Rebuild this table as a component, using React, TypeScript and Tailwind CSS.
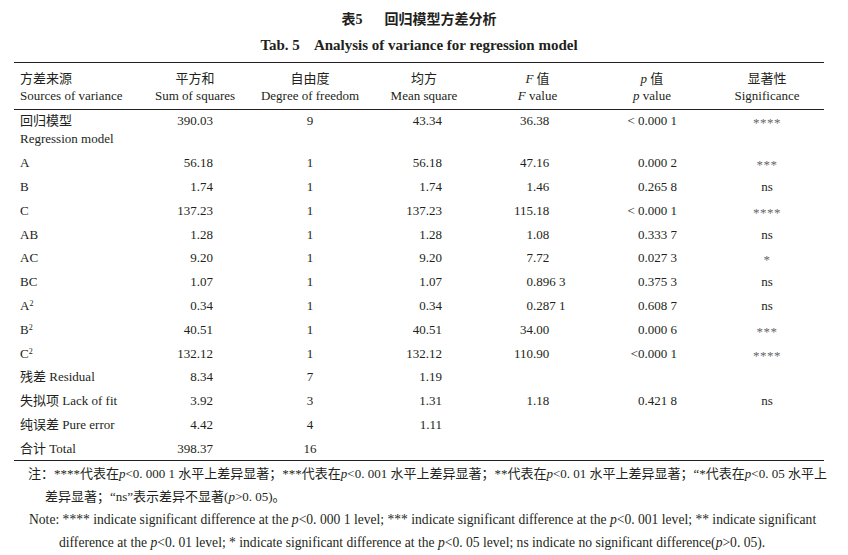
const serif = "font-['Liberation_Serif','Noto_Sans_CJK_SC',serif]";

type Row = {
  name: React.ReactNode;
  ss: string;
  df: string;
  ms: string;
  f?: string;
  p?: string;
  sig?: string;
};

const rows: Row[] = [
  { name: "A", ss: "56.18", df: "1", ms: "56.18", f: "47.16", p: "0.000 2", sig: "***" },
  { name: "B", ss: "1.74", df: "1", ms: "1.74", f: "1.46", p: "0.265 8", sig: "ns" },
  { name: "C", ss: "137.23", df: "1", ms: "137.23", f: "115.18", p: "< 0.000 1", sig: "****" },
  { name: "AB", ss: "1.28", df: "1", ms: "1.28", f: "1.08", p: "0.333 7", sig: "ns" },
  { name: "AC", ss: "9.20", df: "1", ms: "9.20", f: "7.72", p: "0.027 3", sig: "*" },
  { name: "BC", ss: "1.07", df: "1", ms: "1.07", f: "0.896 3", p: "0.375 3", sig: "ns" },
  { name: <>A<sup className="text-[8px]">2</sup></>, ss: "0.34", df: "1", ms: "0.34", f: "0.287 1", p: "0.608 7", sig: "ns" },
  { name: <>B<sup className="text-[8px]">2</sup></>, ss: "40.51", df: "1", ms: "40.51", f: "34.00", p: "0.000 6", sig: "***" },
  { name: <>C<sup className="text-[8px]">2</sup></>, ss: "132.12", df: "1", ms: "132.12", f: "110.90", p: "<0.000 1", sig: "****" },
  { name: "残差 Residual", ss: "8.34", df: "7", ms: "1.19" },
  { name: "失拟项 Lack of fit", ss: "3.92", df: "3", ms: "1.31", f: "1.18", p: "0.421 8", sig: "ns" },
  { name: "纯误差 Pure error", ss: "4.42", df: "4", ms: "1.11" },
  { name: "合计 Total", ss: "398.37", df: "16", ms: "" },
];

const grid = "grid grid-cols-[123px_116px_114px_114px_113px_116px_114px]";

function FValue({ v }: { v?: string }) {
  if (!v) return <div />;
  const i = v.indexOf(".");
  return (
    <div className="flex">
      <span className="w-[52px] text-right">{v.slice(0, i)}</span>
      <span>{v.slice(i)}</span>
    </div>
  );
}

function Sig({ v }: { v?: string }) {
  if (!v) return <div />;
  if (v === "ns") return <div className="text-center">ns</div>;
  // stars sit at mid height in the print
  return (
    <div className="text-center text-[13px] tracking-[0.5px] text-[#666] translate-y-[2px]">{v}</div>
  );
}

function DataRow({ r }: { r: Row }) {
  return (
    <div className={`${grid} h-[23.8px] items-center`}>
      <div className="pl-[6px] whitespace-nowrap">{r.name}</div>
      <div className="text-right pr-[40px]">{r.ss}</div>
      <div className="text-center">{r.df}</div>
      <div className="text-right pr-[39px]">{r.ms}</div>
      <FValue v={r.f} />
      <div className="text-right pr-[33px]">{r.p}</div>
      <Sig v={r.sig} />
    </div>
  );
}

export default function App() {
  return (
    <div className={`w-[848px] h-[555px] bg-white text-[#231f20] ${serif}`}>
      <div className="w-[810px] ml-[14px]">
        <div className="pt-[10px] text-center font-bold text-[14px] leading-[20px]">
          表5<span className="inline-block w-[22px]" />回归模型方差分析
        </div>
        <div className="mt-[5px] text-center font-bold text-[15px] leading-[20px]">
          Tab. 5<span className="inline-block w-[14px]" />Analysis of variance for regression model
        </div>

        <div className="mt-[7px] border-t-[1.5px] border-[#231f20]" />
        <div className={`${grid} pt-[7px] pb-[5px] text-[13px] leading-[17px] border-b border-[#231f20]`}>
          <div className="pl-[6px] whitespace-nowrap">
            <div>方差来源</div>
            <div>Sources of variance</div>
          </div>
          <div className="text-center">
            <div>平方和</div>
            <div>Sum of squares</div>
          </div>
          <div className="text-center whitespace-nowrap">
            <div>自由度</div>
            <div>Degree of freedom</div>
          </div>
          <div className="text-center">
            <div>均方</div>
            <div>Mean square</div>
          </div>
          <div className="text-center">
            <div><i>F</i> 值</div>
            <div><i>F</i> value</div>
          </div>
          <div className="text-center">
            <div><i>p</i> 值</div>
            <div><i>p</i> value</div>
          </div>
          <div className="text-center">
            <div>显著性</div>
            <div>Significance</div>
          </div>
        </div>

        <div className="text-[13px]">
          <div className={`${grid} pt-[2px] h-[41px] leading-[18px]`}>
            <div className="pl-[6px] whitespace-nowrap">
              <div>回归模型</div>
              <div>Regression model</div>
            </div>
            <div className="text-right pr-[40px]">390.03</div>
            <div className="text-center">9</div>
            <div className="text-right pr-[39px]">43.34</div>
            <FValue v="36.38" />
            <div className="text-right pr-[33px]">&lt; 0.000 1</div>
            <Sig v="****" />
          </div>
          {rows.map((r, i) => (
            <DataRow key={i} r={r} />
          ))}
        </div>
        <div className="border-t-[1.5px] border-[#231f20]" />

        <div className="mt-[1px] whitespace-nowrap">
          <div className="pl-[14px] text-[13px] leading-[23px]">
            注：****代表在<i>p</i>&lt;0. 000 1 水平上差异显著；***代表在<i>p</i>&lt;0. 001 水平上差异显著；**代表在<i>p</i>&lt;0. 01 水平上差异显著；“*代表在<i>p</i>&lt;0. 05 水平上
          </div>
          <div className="pl-[31px] text-[13px] leading-[23px]">
            差异显著；“ns”表示差异不显著(<i>p</i>&gt;0. 05)。
          </div>
          <div className="pl-[15px] text-[13.6px] leading-[23px]">
            Note: **** indicate significant difference at the <i>p</i>&lt;0. 000 1 level; *** indicate significant difference at the <i>p</i>&lt;0. 001 level; ** indicate significant
          </div>
          <div className="pl-[45px] text-[13.6px] leading-[23px]">
            difference at the <i>p</i>&lt;0. 01 level; * indicate significant difference at the <i>p</i>&lt;0. 05 level; ns indicate no significant difference(<i>p</i>&gt;0. 05).
          </div>
        </div>
      </div>
    </div>
  );
}
